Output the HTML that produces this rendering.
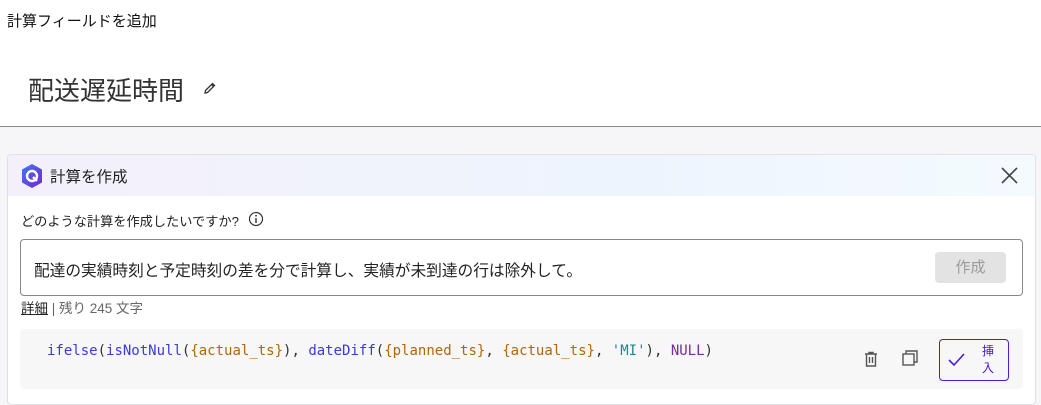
<!DOCTYPE html>
<html><head><meta charset="utf-8"><style>
*{box-sizing:border-box;margin:0;padding:0}
body{width:1041px;height:405px;overflow:hidden;background:#f6f6f8;font-family:"Liberation Sans","Noto Sans CJK JP",sans-serif;color:#222;position:relative}
.top{position:absolute;left:0;top:0;width:1041px;height:127px;background:#fff;border-bottom:1px solid #8a8a8a}
.t1{position:absolute;left:7px;top:10px;font-size:15px;color:#111}
.t2{position:absolute;left:28px;top:71px;font-size:26px;color:#333}
.card{position:absolute;left:7px;top:154px;width:1029px;height:251px;background:#fff;border:1px solid #e0e0e6;border-radius:4px;overflow:hidden}
.hd{height:41px;background:linear-gradient(90deg,#f3f0fb,#eef4fd 60%,#f4fbff);position:relative}
.hd .tt{position:absolute;left:42px;top:10px;font-size:15.5px;color:#222}
.q{position:absolute;left:13px;top:56px;font-size:13.2px;color:#222}
.ta{position:absolute;left:12px;top:84px;width:1003px;height:57px;border:1px solid #888;border-radius:4px}
.ta .tx{position:absolute;left:13px;top:18px;font-size:15.7px;color:#222}
.btn{position:absolute;right:16px;top:12px;width:71px;height:31px;background:#e3e3e3;border-radius:4px;color:#9a9a9a;font-size:15px;text-align:center;line-height:31px}
.dt{position:absolute;left:13px;top:142px;font-size:13.5px;color:#666}
.dt u{color:#222}
.code{position:absolute;left:12px;top:174px;width:1003px;height:60px;background:#f7f7f8;border-radius:4px}
.code pre{position:absolute;left:27px;top:14px;font-family:"DejaVu Sans Mono",monospace;font-size:14px;color:#333}
.f{color:#3a3ae0}.v{color:#b0660a}.s{color:#1a8a8a}.n{color:#7a2a9a}
.ins{position:absolute;left:919px;top:10px;width:70px;height:42px;border:1px solid #4a1ae0;border-radius:4px;color:#4a1ae0}
</style></head><body>
<div class="top">
<div class="t1">計算フィールドを追加</div>
<div class="t2">配送遅延時間</div>
<svg style="position:absolute;left:203px;top:81px" width="14" height="14" viewBox="0 0 14 14"><path d="M2 12 L2.5 9.5 L9.5 2.5 L11.5 4.5 L4.5 11.5 Z M8.5 3.5 L10.5 5.5" fill="none" stroke="#333" stroke-width="1.3"/></svg>
</div>
<div class="card">
<div class="hd">
<svg style="position:absolute;left:12px;top:8px" width="24" height="26" viewBox="0 0 24 26"><defs><linearGradient id="g" x1="0" y1="0" x2="1" y2="1"><stop offset="0" stop-color="#3a7bf0"/><stop offset="1" stop-color="#7a22d8"/></linearGradient></defs><path d="M12 1 L22 6.5 V19.5 L12 25 L2 19.5 V6.5 Z" fill="url(#g)"/><circle cx="12" cy="13" r="5" fill="none" stroke="#fff" stroke-width="2.4"/><path d="M13 14 L17 18" stroke="#fff" stroke-width="2.4"/></svg>
<div class="tt">計算を作成</div>
<svg style="position:absolute;left:993px;top:12px" width="17" height="17" viewBox="0 0 17 17"><path d="M1 1 L16 16 M16 1 L1 16" stroke="#444" stroke-width="1.6"/></svg>
</div>
<div class="q">どのような計算を作成したいですか?</div>
<svg style="position:absolute;left:240px;top:56px" width="16" height="16" viewBox="0 0 16 16"><circle cx="8" cy="8" r="6.5" fill="none" stroke="#333" stroke-width="1.2"/><path d="M8 7 V12" stroke="#333" stroke-width="1.4"/><circle cx="8" cy="4.8" r="0.9" fill="#333"/></svg>
<div class="ta"><div class="tx">配達の実績時刻と予定時刻の差を分で計算し、実績が未到達の行は除外して。</div><div class="btn">作成</div></div>
<div class="dt"><u>詳細</u> | 残り 245 文字</div>
<div class="code"><pre><span class="f">ifelse</span>(<span class="f">isNotNull</span>(<span class="v">{actual_ts}</span>), <span class="f">dateDiff</span>(<span class="v">{planned_ts}</span>, <span class="v">{actual_ts}</span>, <span class="s">'MI'</span>), <span class="n">NULL</span>)</pre>
<svg style="position:absolute;left:844px;top:22px" width="14" height="16" viewBox="0 0 14 16"><path d="M1 3 H13 M5 3 V1.5 H9 V3 M2.5 3 V15 H11.5 V3 M5.5 6 V12 M8.5 6 V12" fill="none" stroke="#555" stroke-width="1.4"/></svg>
<svg style="position:absolute;left:882px;top:21px" width="16" height="16" viewBox="0 0 16 16"><rect x="1" y="4" width="11" height="11" fill="none" stroke="#555" stroke-width="1.4"/><path d="M4 4 V1 H15 V12 H12" fill="none" stroke="#555" stroke-width="1.4"/></svg>
<div class="ins"><svg style="position:absolute;left:8px;top:13px" width="17" height="14" viewBox="0 0 17 14"><path d="M1 7 L6 12 L16 1" fill="none" stroke="#4a1ae0" stroke-width="1.6"/></svg><div style="position:absolute;left:42px;top:3px;font-size:12px;line-height:17px;width:14px">挿入</div></div>
</div>
</div>
</body></html>
